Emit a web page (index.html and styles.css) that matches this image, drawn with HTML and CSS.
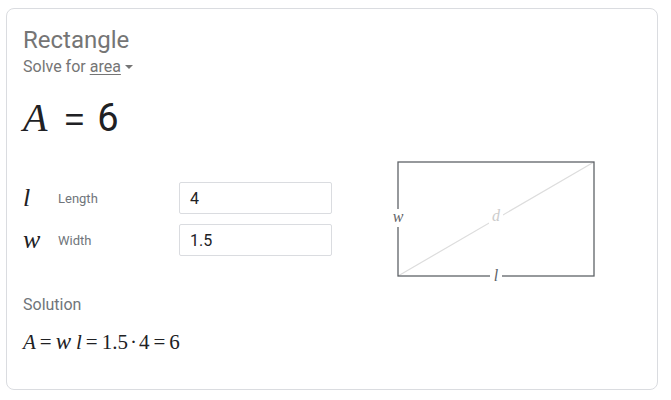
FILE: index.html
```html
<!DOCTYPE html>
<html>
<head>
<meta charset="utf-8">
<link rel="stylesheet" href="styles.css">
</head>
<body>
<div class="card">
  <div class="title">Rectangle</div>
  <div class="solvefor">Solve for <span class="link">area</span><span class="caret"></span></div>
  <div class="result"><span class="mvar">A</span><span class="eq">=</span><span class="val">6</span></div>
  <div class="middle">
    <div class="inputs">
      <div class="row"><span class="sym">l</span><span class="lbl">Length</span><div class="box">4</div></div>
      <div class="row"><span class="sym">w</span><span class="lbl">Width</span><div class="box">1.5</div></div>
    </div>
    <svg class="diagram" width="220" height="130" viewBox="0 0 220 130">
      <line x1="16" y1="115" x2="212" y2="1" stroke="#dddddd" stroke-width="1.2"/>
      <rect x="16" y="1" width="196" height="114" fill="none" stroke="#5f6368" stroke-width="1.3"/>
      <rect x="9" y="48" width="14" height="18" fill="#fff"/>
      <text x="16" y="61" class="dl" text-anchor="middle">w</text>
      <rect x="107" y="45" width="14" height="20" fill="#fff"/>
      <text x="114" y="60" class="dl light" text-anchor="middle">d</text>
      <rect x="108" y="106" width="12" height="20" fill="#fff"/>
      <text x="114" y="120" class="dl" text-anchor="middle">l</text>
    </svg>
  </div>
  <div class="soltitle">Solution</div>
  <div class="formula"><i>A</i><span class="mo">=</span><i class="wv">w</i><i>l</i><span class="mo">=</span>1.5<span class="dot">·</span>4<span class="mo">=</span>6</div>
</div>
</body>
</html>
```
FILE: styles.css
```css
html, body { margin: 0; padding: 0; background: #fff; }
body { font-family: Roboto, "Noto Sans", sans-serif; }
.card {
  margin: 8px 0 0 6px;
  border: 1px solid #dadce0;
  border-radius: 8px;
  padding: 0 0 0 16px;
  box-sizing: border-box;
  width: 652px;
  height: 382px;
}
.title { font-size: 24px; color: #757575; margin-top: 16px; line-height: 30px; }
.solvefor { font-size: 16px; color: #757575; line-height: 20px; margin-top: 2px; }
.link { text-decoration: underline; text-underline-offset: 2px; }
.caret { display: inline-block; width: 0; height: 0; border-left: 4px solid transparent; border-right: 4px solid transparent; border-top: 4px solid #757575; vertical-align: middle; margin-left: 4px; position: relative; top: -1px; }
.result { margin-top: 17px; height: 46px; display: flex; align-items: baseline; color: #202124; }
.mvar { font-family: "Liberation Serif", serif; font-style: italic; font-size: 40px; }
.eq { font-family: "Liberation Sans", sans-serif; font-size: 34px; margin: 0 13px 0 17px; }
.val { font-size: 38px; }
.middle { display: flex; margin-top: 21px; height: 132px; }
.inputs { width: 360px; padding-top: 21px; }
.row { display: flex; align-items: center; height: 32px; margin-bottom: 10px; }
.sym { font-family: "Liberation Serif", serif; font-style: italic; font-size: 26px; width: 35px; color: #202124; }
.lbl { font-size: 13px; color: #70757a; width: 121px; }
.box { width: 153px; height: 32px; box-sizing: border-box; border: 1px solid #dadce0; border-radius: 2px; font-size: 16px; color: #202124; padding: 6px 10px; line-height: 20px; }
.diagram { margin-left: -1px; margin-top: 0; overflow: visible; }
.dl { font-family: "Liberation Serif", serif; font-style: italic; font-size: 16px; fill: #5f6368; }
.dl.light { fill: #cccccc; }
.soltitle { font-size: 16px; color: #70757a; margin-top: 2px; line-height: 20px; }
.formula { font-family: "Liberation Serif", serif; font-size: 21px; color: #202124; margin-top: 14px; }
.formula i { font-style: italic; }
.wv { font-size: 23px; margin-right: 5px; }
.mo { margin: 0 4px; }
.dot { margin: 0 2px; }
```
